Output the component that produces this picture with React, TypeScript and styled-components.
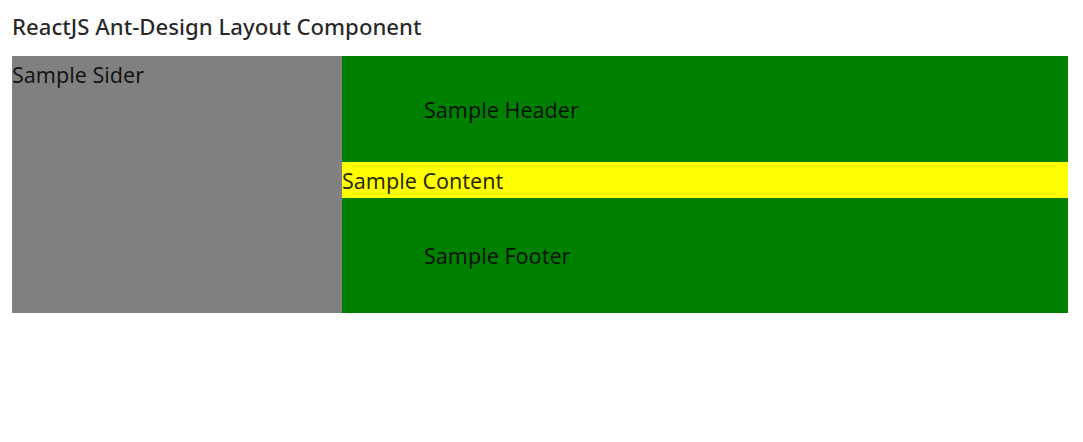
import React from 'react';
import styled, { createGlobalStyle } from 'styled-components';

const GlobalStyle = createGlobalStyle`
  body {
    margin: 0;
    background: #ffffff;
    font-family: 'Noto Sans', 'Open Sans', sans-serif;
    color: rgba(0, 0, 0, 0.85);
  }
`;

const Page = styled.div`
  padding: 12px 15px 12px 12px;
`;

const Title = styled.h3`
  margin: 2px 0 16px;
  height: 26px;
  line-height: 26px;
  font-size: 22.2px;
  font-weight: 500;
  color: rgba(0, 0, 0, 0.85);
`;

const Layout = styled.div`
  display: flex;
  height: 257px;
`;

const Sider = styled.aside`
  flex: 0 0 330px;
  background: #808080;
  font-size: 21.5px;
  line-height: 38px;
`;

const Main = styled.div`
  flex: 1;
  display: flex;
  flex-direction: column;
`;

const Band = styled.div<{ $tall: number }>`
  height: ${(p) => p.$tall}px;
  background: #008000;
  padding: 0 0 0 82px;
  display: flex;
  align-items: center;
  font-size: 21.5px;
`;

const Content = styled.main`
  height: 36px;
  background: #ffff00;
  display: flex;
  align-items: center;
  padding-top: 1px;
  box-sizing: border-box;
  font-size: 21.5px;
`;

const App = () => (
  <Page>
    <GlobalStyle />
    <Title>ReactJS Ant-Design Layout Component</Title>
    <Layout>
      <Sider>Sample Sider</Sider>
      <Main>
        <Band $tall={106}>Sample Header</Band>
        <Content>Sample Content</Content>
        <Band $tall={115}>Sample Footer</Band>
      </Main>
    </Layout>
  </Page>
);

export default App;
